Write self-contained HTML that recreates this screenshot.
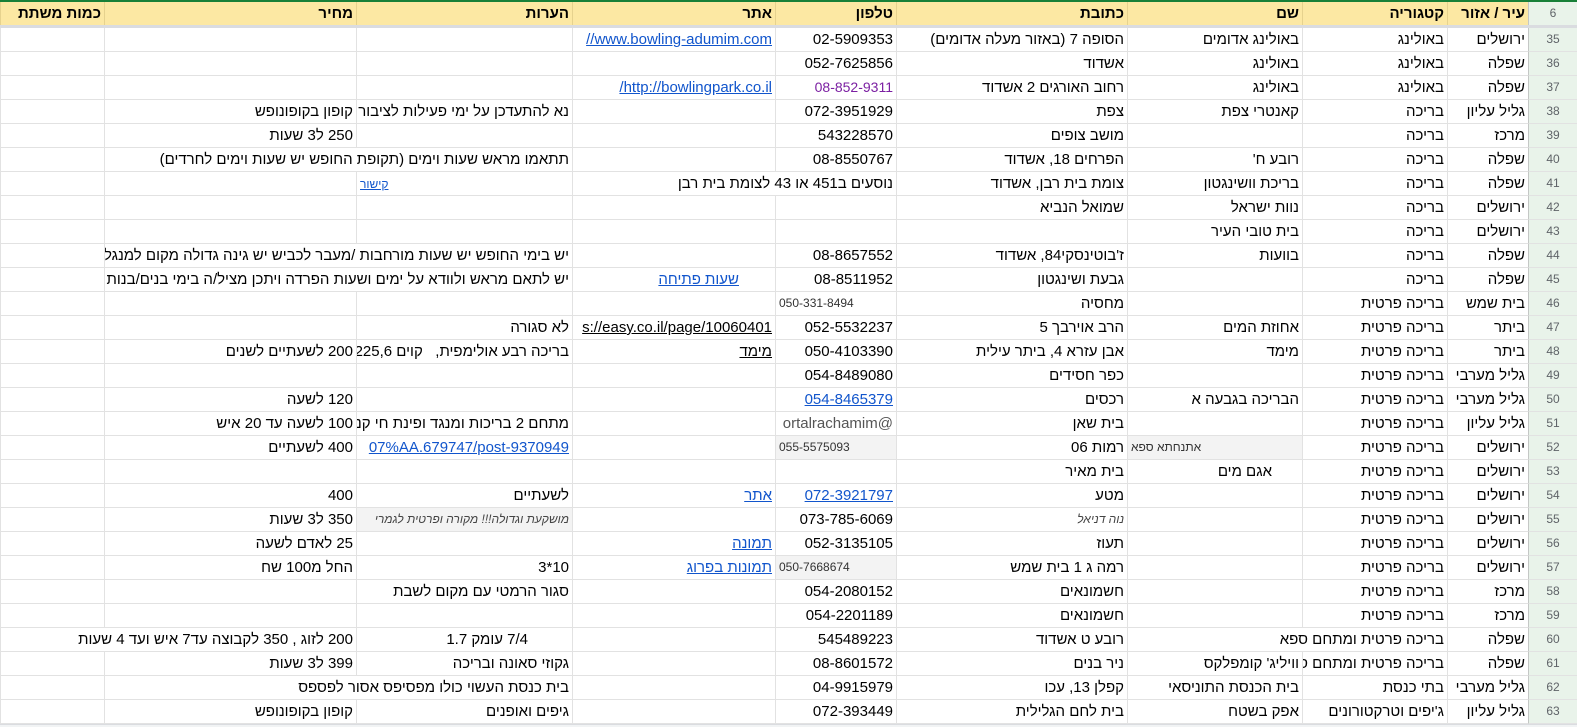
<!DOCTYPE html>
<html><head><meta charset="utf-8">
<style>
*{box-sizing:border-box;margin:0;padding:0}
body{width:1577px;height:727px;overflow:hidden;background:#fff;font-family:"Liberation Sans",Arial,sans-serif;font-size:15px;color:#000;position:relative}
.top{position:absolute;left:0;top:0;width:1577px;height:2px;background:#188038}
.hdr{position:absolute;left:0;top:2px;width:1577px;height:23px;background:#fce8a3}
.frz{position:absolute;left:0;top:25px;width:1577px;height:3px;background:#dadce0}
.rows{position:absolute;left:0;top:28px;width:1577px}
.r{position:relative;height:24px}
.c{position:absolute;top:0;height:24px;border-left:1px solid #e2e2e2;border-bottom:1px solid #e2e2e2;line-height:23px;padding:0 3px;white-space:nowrap;overflow:hidden;text-align:right;direction:rtl;background:#fff}
.hdr .c{height:23px;background:#fce8a3;border-left:1px solid #e6d28e;border-bottom:none;font-weight:bold;line-height:23px}
.n{left:1528px;width:49px;background:#e9f3ea;color:#5f6368;font-size:12px;text-align:center;border-left:1px solid #c4c7c5;direction:ltr}
.hdr .n{background:#e9f3ea;font-weight:normal;border-left:1px solid #c4c7c5}
.a{left:1447px;width:81px}
.b{left:1302px;width:145px}
.cc{left:1127px;width:175px}
.d{left:896px;width:231px}
.e{left:775px;width:121px}
.f{left:572px;width:203px}
.g{left:356px;width:216px}
.h{left:104px;width:252px}
.i{left:0;width:104px}
.s{z-index:2}
.l{color:#1155cc;text-decoration:underline}
.k{color:#000;text-decoration:underline}
.sm{font-size:12px;color:#333}
.gr{background:#f3f3f3}
.ltr{direction:ltr;text-align:left}
.lt{text-align:left}
.it{font-style:italic;font-size:12px;color:#444}
</style></head><body>
<div class="top"></div>
<div class="hdr">
<div class="c n">6</div><div class="c a">עיר / אזור</div><div class="c b">קטגוריה</div><div class="c cc">שם</div><div class="c d">כתובת</div><div class="c e">טלפון</div><div class="c f">אתר</div><div class="c g">הערות</div><div class="c h">מחיר</div><div class="c i">כמות משתת</div>
</div>
<div class="frz"></div>
<div class="rows">
<div class="r"><div class="c n">35</div><div class="c a">ירושלים</div><div class="c b">באולינג</div><div class="c cc">באולינג אדומים</div><div class="c d">הסופה 7 (באזור מעלה אדומים)</div><div class="c e">02-5909353</div><div class="c f ltr" style="text-align:right"><span class="l">//www.bowling-adumim.com</span></div><div class="c g"></div><div class="c h"></div><div class="c i"></div></div>
<div class="r"><div class="c n">36</div><div class="c a">שפלה</div><div class="c b">באולינג</div><div class="c cc">באולינג</div><div class="c d">אשדוד</div><div class="c e">052-7625856</div><div class="c f"></div><div class="c g"></div><div class="c h"></div><div class="c i"></div></div>
<div class="r"><div class="c n">37</div><div class="c a">שפלה</div><div class="c b">באולינג</div><div class="c cc">באולינג</div><div class="c d">רחוב האורגים 2 אשדוד</div><div class="c e" style="color:#7b1fa2;font-size:14px">08-852-9311</div><div class="c f ltr" style="text-align:right"><span class="l">/http://bowlingpark.co.il</span></div><div class="c g"></div><div class="c h"></div><div class="c i"></div></div>
<div class="r"><div class="c n">38</div><div class="c a">גליל עליון</div><div class="c b">בריכה</div><div class="c cc">קאנטרי צפת</div><div class="c d">צפת</div><div class="c e">072-3951929</div><div class="c f"></div><div class="c g">נא להתעדכן על ימי פעילות לציבור</div><div class="c h">קופון בקופונופש</div><div class="c i"></div></div>
<div class="r"><div class="c n">39</div><div class="c a">מרכז</div><div class="c b">בריכה</div><div class="c cc"></div><div class="c d">מושב צופים</div><div class="c e">543228570</div><div class="c f"></div><div class="c g"></div><div class="c h">250 ל3 שעות</div><div class="c i"></div></div>
<div class="r"><div class="c n">40</div><div class="c a">שפלה</div><div class="c b">בריכה</div><div class="c cc">רובע ח'</div><div class="c d">הפרחים 18, אשדוד</div><div class="c e">08-8550767</div><div class="c f"></div><div class="c h"></div><div class="c i"></div><div class="c s" style="left:104px;width:468px">תתאמו מראש שעות וימים (תקופת החופש יש שעות וימים לחרדים)</div></div>
<div class="r"><div class="c n">41</div><div class="c a">שפלה</div><div class="c b">בריכה</div><div class="c cc">בריכת וושינגטון</div><div class="c d">צומת בית רבן, אשדוד</div><div class="c s" style="left:572px;width:324px">נוסעים ב451 או 43 לצומת בית רבן</div><div class="c g lt"><span class="l" style="font-size:12px">קישור</span></div><div class="c h"></div><div class="c i"></div></div>
<div class="r"><div class="c n">42</div><div class="c a">ירושלים</div><div class="c b">בריכה</div><div class="c cc">נוות ישראל</div><div class="c d">שמואל הנביא</div><div class="c e"></div><div class="c f"></div><div class="c g"></div><div class="c h"></div><div class="c i"></div></div>
<div class="r"><div class="c n">43</div><div class="c a">ירושלים</div><div class="c b">בריכה</div><div class="c cc">בית טובי העיר</div><div class="c d"></div><div class="c e"></div><div class="c f"></div><div class="c g"></div><div class="c h"></div><div class="c i"></div></div>
<div class="r"><div class="c n">44</div><div class="c a">שפלה</div><div class="c b">בריכה</div><div class="c cc">בוועות</div><div class="c d">ז'בוטינסקי84, אשדוד</div><div class="c e">08-8657552</div><div class="c f"></div><div class="c i"></div><div class="c s" style="left:104px;width:468px">יש בימי החופש יש שעות מורחבות /מעבר לכביש יש גינה גדולה מקום למנגל</div></div>
<div class="r"><div class="c n">45</div><div class="c a">שפלה</div><div class="c b">בריכה</div><div class="c cc"></div><div class="c d">גבעת ושינגטון</div><div class="c e">08-8511952</div><div class="c f" style="padding-right:36px"><span class="l">שעות פתיחה</span></div><div class="c i"></div><div class="c s" style="left:104px;width:468px">יש לתאם מראש ולוודא על ימים ושעות הפרדה ויתכן מציל/ה בימי בנים/בנות</div></div>
<div class="r"><div class="c n">46</div><div class="c a">בית שמש</div><div class="c b">בריכה פרטית</div><div class="c cc"></div><div class="c d">מחסיה</div><div class="c e lt sm ltr">050-331-8494</div><div class="c f"></div><div class="c g"></div><div class="c h"></div><div class="c i"></div></div>
<div class="r"><div class="c n">47</div><div class="c a">ביתר</div><div class="c b">בריכה פרטית</div><div class="c cc">אחוזת המים</div><div class="c d">הרב אוירבך 5</div><div class="c e">052-5532237</div><div class="c f ltr" style="text-align:right"><span class="k">s://easy.co.il/page/10060401</span></div><div class="c g">לא סגורה</div><div class="c h"></div><div class="c i"></div></div>
<div class="r"><div class="c n">48</div><div class="c a">ביתר</div><div class="c b">בריכה פרטית</div><div class="c cc">מימד</div><div class="c d">אבן עזרא 4, ביתר עילית</div><div class="c e">050-4103390</div><div class="c f"><span class="k">מימד</span></div><div class="c g">בריכה רבע אולימפית,&nbsp;&nbsp; קוים 225,6</div><div class="c h">200 לשעתיים לשנים</div><div class="c i"></div></div>
<div class="r"><div class="c n">49</div><div class="c a">גליל מערבי</div><div class="c b">בריכה פרטית</div><div class="c cc"></div><div class="c d">כפר חסידים</div><div class="c e">054-8489080</div><div class="c f"></div><div class="c g"></div><div class="c h"></div><div class="c i"></div></div>
<div class="r"><div class="c n">50</div><div class="c a">גליל מערבי</div><div class="c b">בריכה פרטית</div><div class="c cc">הבריכה בגבעה א</div><div class="c d">רכסים</div><div class="c e"><span class="l">054-8465379</span></div><div class="c f"></div><div class="c g"></div><div class="c h">120 לשעה</div><div class="c i"></div></div>
<div class="r"><div class="c n">51</div><div class="c a">גליל עליון</div><div class="c b">בריכה פרטית</div><div class="c cc"></div><div class="c d">בית שאן</div><div class="c e ltr" style="text-align:right;color:#555">ortalrachamim@</div><div class="c f"></div><div class="c g">מתחם 2 בריכות ומנגד ופינת חי קנ</div><div class="c h">100 לשעה עד 20 איש</div><div class="c i"></div></div>
<div class="r"><div class="c n">52</div><div class="c a">ירושלים</div><div class="c b">בריכה פרטית</div><div class="c cc gr lt sm">אתנחתא ספא</div><div class="c d">רמות 06</div><div class="c e gr lt sm ltr">055-5575093</div><div class="c f"></div><div class="c g ltr" style="text-align:right"><span class="l">07%AA.679747/post-9370949</span></div><div class="c h">400 לשעתיים</div><div class="c i"></div></div>
<div class="r"><div class="c n">53</div><div class="c a">ירושלים</div><div class="c b">בריכה פרטית</div><div class="c cc" style="padding-right:30px">אגם מים</div><div class="c d">בית מאיר</div><div class="c e"></div><div class="c f"></div><div class="c g"></div><div class="c h"></div><div class="c i"></div></div>
<div class="r"><div class="c n">54</div><div class="c a">ירושלים</div><div class="c b">בריכה פרטית</div><div class="c cc"></div><div class="c d">מטע</div><div class="c e"><span class="l">072-3921797</span></div><div class="c f"><span class="l">אתר</span></div><div class="c g">לשעתיים</div><div class="c h">400</div><div class="c i"></div></div>
<div class="r"><div class="c n">55</div><div class="c a">ירושלים</div><div class="c b">בריכה פרטית</div><div class="c cc"></div><div class="c d it">נוה דניאל</div><div class="c e">073-785-6069</div><div class="c f"></div><div class="c g gr it">מושקעת וגדולה!!! מקורה ופרטית לגמרי</div><div class="c h">350 ל3 שעות</div><div class="c i"></div></div>
<div class="r"><div class="c n">56</div><div class="c a">ירושלים</div><div class="c b">בריכה פרטית</div><div class="c cc"></div><div class="c d">תעוז</div><div class="c e">052-3135105</div><div class="c f"><span class="l">תמונה</span></div><div class="c g"></div><div class="c h">25 לאדם לשעה</div><div class="c i"></div></div>
<div class="r"><div class="c n">57</div><div class="c a">ירושלים</div><div class="c b">בריכה פרטית</div><div class="c cc"></div><div class="c d">רמה ג 1 בית שמש</div><div class="c e gr lt sm ltr">050-7668674</div><div class="c f"><span class="l">תמונות בפרוג</span></div><div class="c g">10*3</div><div class="c h">החל מ100 שח</div><div class="c i"></div></div>
<div class="r"><div class="c n">58</div><div class="c a">מרכז</div><div class="c b">בריכה פרטית</div><div class="c cc"></div><div class="c d">חשמונאים</div><div class="c e">054-2080152</div><div class="c f"></div><div class="c g">סגור הרמטי עם מקום לשבת</div><div class="c h"></div><div class="c i"></div></div>
<div class="r"><div class="c n">59</div><div class="c a">מרכז</div><div class="c b">בריכה פרטית</div><div class="c cc"></div><div class="c d">חשמונאים</div><div class="c e">054-2201189</div><div class="c f"></div><div class="c g"></div><div class="c h"></div><div class="c i"></div></div>
<div class="r"><div class="c n">60</div><div class="c a">שפלה</div><div class="c s" style="left:1127px;width:320px">בריכה פרטית ומתחם ספא</div><div class="c d">רובע ט אשדוד</div><div class="c e">545489223</div><div class="c f"></div><div class="c g" style="padding-right:44px">7/4 עומק 1.7</div><div class="c s" style="left:0;width:356px">200 לזוג , 350 לקבוצה עד7 איש ועד 4 שעות</div></div>
<div class="r"><div class="c n">61</div><div class="c a">שפלה</div><div class="c b">בריכה פרטית ומתחם ספא</div><div class="c cc">וויליג' קומפלקס</div><div class="c d">ניר בנים</div><div class="c e">08-8601572</div><div class="c f"></div><div class="c g">גקוזי סאונה ובריכה</div><div class="c h">399 ל3 שעות</div><div class="c i"></div></div>
<div class="r"><div class="c n">62</div><div class="c a">גליל מערבי</div><div class="c b">בתי כנסת</div><div class="c cc">בית הכנסת התוניסאי</div><div class="c d">קפלן 13, עכו</div><div class="c e">04-9915979</div><div class="c f"></div><div class="c i"></div><div class="c s" style="left:104px;width:468px">בית כנסת העשוי כולו מפסיפס אסור לפספס</div></div>
<div class="r"><div class="c n">63</div><div class="c a">גליל עליון</div><div class="c b">ג'יפים וטרקטורונים</div><div class="c cc">אפק בשטח</div><div class="c d">בית לחם הגלילית</div><div class="c e">072-393449</div><div class="c f"></div><div class="c g">גיפים ואופנים</div><div class="c h">קופון בקופונופש</div><div class="c i"></div></div>
</div>
<div style="position:absolute;left:0;top:724px;width:1577px;height:3px;background:#f1f3f4;border-top:1px solid #dadce0"></div>
</body></html>
